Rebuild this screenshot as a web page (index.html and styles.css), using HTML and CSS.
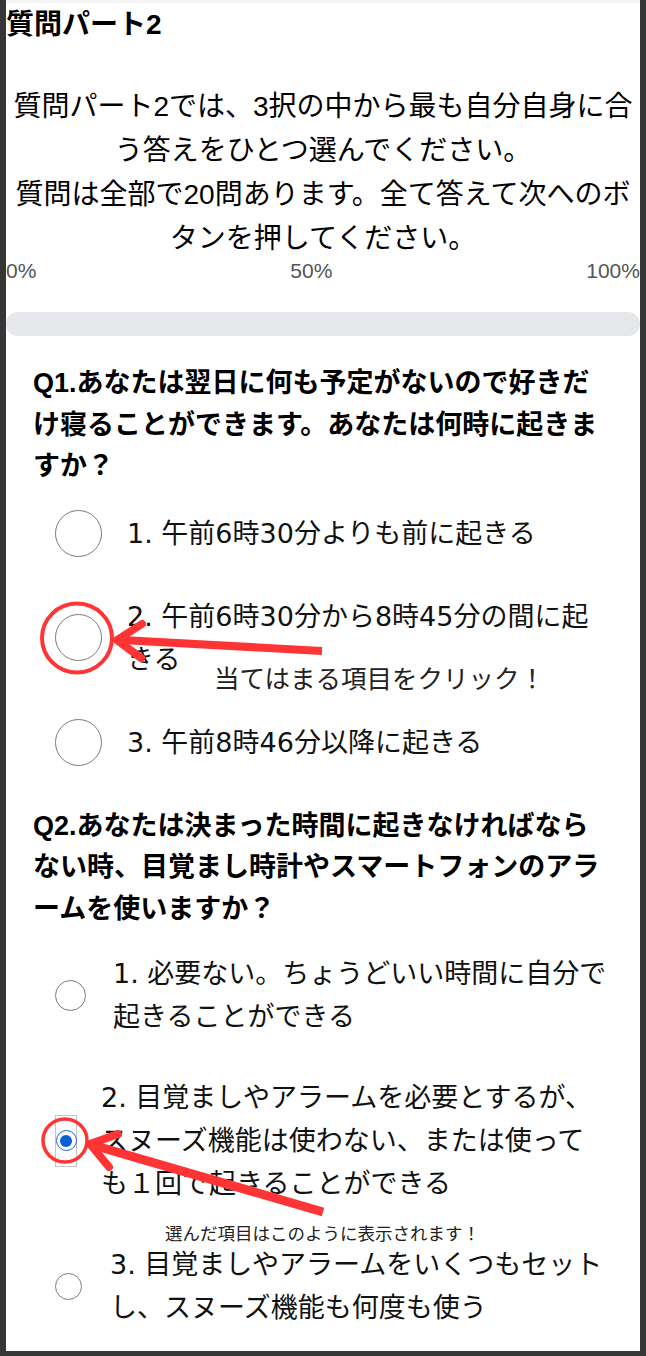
FILE: index.html
```html
<!DOCTYPE html>
<html lang="ja">
<head>
<meta charset="utf-8">
<title>質問パート2</title>
<link rel="stylesheet" href="styles.css">
</head>
<body>
<div class="frame">
  <header class="intro">
    <h1 class="title">質問パート2</h1>
    <p class="lead">質問パート2では、3択の中から最も自分自身に合う答えをひとつ選んでください。<br>質問は全部で20問あります。全て答えて次へのボタンを押してください。</p>
    <div class="progress-labels"><span>0%</span><span>50%</span><span>100%</span></div>
    <div class="progress-track"></div>
  </header>

  <section class="question">
    <h2 class="q-text">Q1.あなたは翌日に何も予定がないので好きだけ寝ることができます。あなたは何時に起きますか？</h2>
    <ul class="options">
      <li class="option opt-lg"><span class="radio"></span><span class="label">1. 午前6時30分よりも前に起きる</span></li>
      <li class="option opt-lg"><span class="radio"></span><span class="label">2. 午前6時30分から8時45分の間に起きる</span></li>
      <li class="option opt-lg"><span class="radio"></span><span class="label">3. 午前8時46分以降に起きる</span></li>
    </ul>
  </section>

  <section class="question">
    <h2 class="q-text">Q2.あなたは決まった時間に起きなければならない時、目覚まし時計やスマートフォンのアラームを使いますか？</h2>
    <ul class="options">
      <li class="option opt-md"><span class="radio"></span><span class="label">1. 必要ない。ちょうどいい時間に自分で起きることができる</span></li>
      <li class="option opt-sel"><span class="radio-box"><span class="radio radio-checked"></span></span><span class="label">2. 目覚ましやアラームを必要とするが、スヌーズ機能は使わない、または使っても１回で起きることができる</span></li>
      <li class="option opt-ms"><span class="radio"></span><span class="label">3. 目覚ましやアラームをいくつもセットし、スヌーズ機能も何度も使う</span></li>
    </ul>
  </section>
</div>

<div class="annotations">
  <svg class="marks" viewBox="0 0 646 1356" width="646" height="1356">
    <g fill="none" stroke="#ff3535">
      <ellipse cx="77" cy="638" rx="35" ry="34.5" stroke-width="4"/>
      <path d="M322 651 L122 640" stroke-width="8"/>
      <path d="M142 624 L117 640 L141 658" stroke-width="8" stroke-linecap="round" stroke-linejoin="round"/>
      <ellipse cx="65" cy="1140.5" rx="22" ry="21.5" stroke-width="3.5"/>
      <path d="M323 1212 L96 1146" stroke-width="9"/>
      <path d="M118 1134 L90 1144 L109 1167" stroke-width="8" stroke-linecap="round" stroke-linejoin="round"/>
    </g>
  </svg>
  <div class="note note-click">当てはまる項目をクリック！</div>
  <div class="note note-selected">選んだ項目はこのように表示されます！</div>
</div>
</body>
</html>
```
FILE: styles.css
```css
html, body {
  margin: 0;
  padding: 0;
}

body {
  position: relative;
  width: 646px;
  height: 1356px;
  overflow: hidden;
  background: #363636;
  color: #000;
  font-family: "Liberation Sans", "Noto Sans CJK JP", sans-serif;
  line-break: loose;
}

.frame {
  box-sizing: border-box;
  margin-left: 6px;
  width: 634px;
  height: 1351px;
  overflow: hidden;
  background: #fff;
  border-top: 3px solid #f4f4f5;
}

.intro {
  padding-bottom: 4px;
}

.title {
  margin: 4px 0 0;
  font-size: 28px;
  line-height: 36px;
  font-weight: 700;
}

.lead {
  margin: 42px 0 0;
  font-size: 28px;
  line-height: 44px;
  text-align: center;
  font-weight: 400;
}

.progress-labels {
  display: flex;
  justify-content: space-between;
  font-size: 21px;
  line-height: 20px;
  color: #555;
}

.progress-track {
  margin-top: 31px;
  height: 24px;
  border-radius: 12px;
  background: #e5e7eb;
}

.question {
  margin-top: 23px;
  padding: 0 32px 0 27px;
}

.question + .question {
  margin-top: 21px;
}

.q-text {
  margin: 0 0 3px;
  font-size: 27px;
  line-height: 41.5px;
  font-weight: 700;
}

.options {
  list-style: none;
  margin: 0 -2px 0 0;
  padding: 0 0 0 22px;
}

.option {
  display: flex;
  align-items: center;
  gap: 25px;
  padding: 19px 0;
}

.label {
  flex: 1;
  min-width: 0;
  font-family: "DejaVu Sans", "Noto Sans CJK JP", sans-serif;
  font-size: 27px;
  line-height: 43px;
  color: #111;
}

.radio {
  flex: none;
  box-sizing: border-box;
  border: 1.5px solid #7b7b7b;
  border-radius: 50%;
  background: #fff;
}

.opt-lg .radio {
  width: 47px;
  height: 47px;
}

.opt-md {
  gap: 27px;
}

.opt-md .radio {
  width: 31px;
  height: 31px;
}

.opt-ms {
  gap: 28px;
}

.opt-ms .radio {
  width: 27px;
  height: 27px;
}

.opt-sel {
  gap: 24px;
}

.opt-sel .label {
  padding-right: 11px;
}

.radio-box {
  flex: none;
  box-sizing: border-box;
  width: 22px;
  height: 52px;
  border: 1px solid #c4c4c4;
  display: flex;
  align-items: center;
  justify-content: center;
}

.radio-checked {
  width: 21px;
  height: 21px;
  border: 1.5px solid #1d63d4;
  display: flex;
  align-items: center;
  justify-content: center;
}

.radio-checked::after {
  content: "";
  width: 12px;
  height: 12px;
  border-radius: 50%;
  background: #0b5fd6;
}

.annotations {
  position: absolute;
  left: 0;
  top: 0;
  width: 646px;
  height: 1356px;
  pointer-events: none;
}

.marks {
  position: absolute;
  left: 0;
  top: 0;
}

.note {
  position: absolute;
  white-space: nowrap;
  font-family: "Noto Sans CJK JP", sans-serif;
  color: #222;
}

.note-click {
  left: 214px;
  top: 662px;
  font-size: 25.5px;
  line-height: 30px;
}

.note-selected {
  left: 165px;
  top: 1222px;
  font-size: 17.5px;
  line-height: 22px;
}
```
